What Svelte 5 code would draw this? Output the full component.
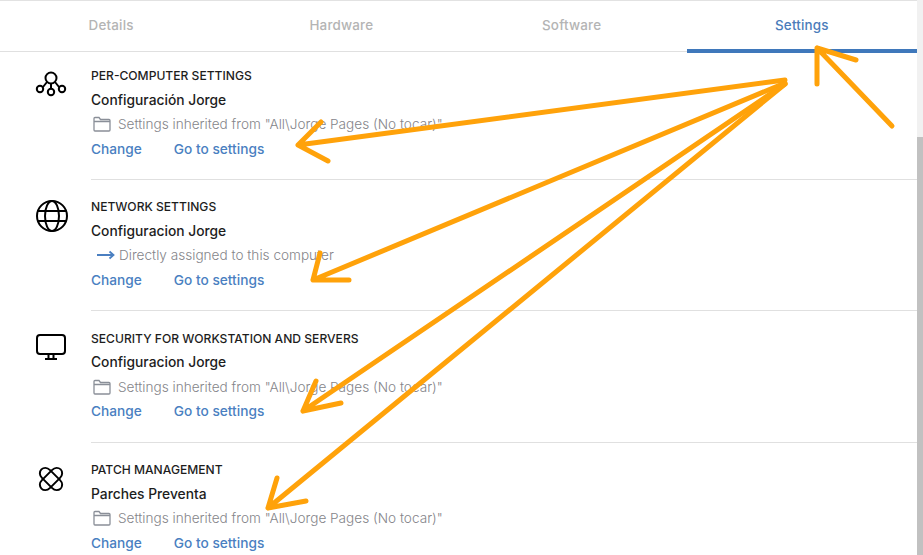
<script lang="ts">
  const tabs = ['Details', 'Hardware', 'Software', 'Settings'];

  const rows = [
    { icon: 'nodes', title: 'PER-COMPUTER SETTINGS', name: 'Configuración Jorge', origin: 'folder', text: 'Settings inherited from "All\\Jorge Pages (No tocar)"' },
    { icon: 'globe', title: 'NETWORK SETTINGS', name: 'Configuracion Jorge', origin: 'arrow', text: 'Directly assigned to this computer' },
    { icon: 'monitor', title: 'SECURITY FOR WORKSTATION AND SERVERS', name: 'Configuracion Jorge', origin: 'folder', text: 'Settings inherited from "All\\Jorge Pages (No tocar)"' },
    { icon: 'patch', title: 'PATCH MANAGEMENT', name: 'Parches Preventa', origin: 'folder', text: 'Settings inherited from "All\\Jorge Pages (No tocar)"' },
  ];

  const arrows = [
    'M785 80 L298 145 M321 122 L298 145 L328 161',
    'M785 83 L313 280 M320 253 L313 280 L349 280',
    'M785 84 L303 411 M316 381 L303 411 L341 403',
    'M785 84 L268 508 M277 478 L268 508 L306 501',
    'M892 126 L817 48 M817 84 L817 48 L856 60',
  ];
</script>

<div class="page">
  <div class="main">
    <div class="tabs">
      {#each tabs as tab, i}
        <div class="tab" class:active={i === 3}>{tab}</div>
      {/each}
    </div>

    {#each rows as row}
      <div class="row">
        <div class="icon">
          {#if row.icon === 'nodes'}
            <svg class="nodes" width="32" height="28" viewBox="0 0 32 28" fill="none" stroke="#000" stroke-width="2">
              <circle cx="16" cy="8" r="5.5" />
              <circle cx="5" cy="19" r="3.2" />
              <circle cx="16" cy="22" r="3.2" />
              <circle cx="27" cy="19" r="3.2" />
              <path d="M12 12 L8 17 M16 13.5 V19 M20 12 L24 17" />
            </svg>
          {:else if row.icon === 'globe'}
            <svg class="globe" width="32" height="32" viewBox="0 0 32 32" fill="none" stroke="#000" stroke-width="2">
              <circle cx="16" cy="16" r="15" />
              <ellipse cx="16" cy="16" rx="7" ry="15" />
              <path d="M2 11 H30 M2 21 H30" />
            </svg>
          {:else if row.icon === 'monitor'}
            <svg class="monitor" width="30" height="26" viewBox="0 0 30 26" fill="none" stroke="#000" stroke-width="2">
              <rect x="1" y="1" width="28" height="19" rx="3" />
              <path d="M12.5 20 V25 M17.5 20 V25 M9 25 H21" />
            </svg>
          {:else}
            <svg class="patch" width="26" height="26" viewBox="0 0 28 28" fill="none" stroke="#000" stroke-width="2.1">
              <path d="M8 2 C4.5 2 2 4.5 2 8 C2 10 3 11.5 4.5 13 L15 23.5 C16.5 25 18 26 20 26 C23.5 26 26 23.5 26 20 C26 18 25 16.5 23.5 15 L13 4.5 C11.5 3 10 2 8 2 Z" />
              <path d="M20 2 C23.5 2 26 4.5 26 8 C26 10 25 11.5 23.5 13 L13 23.5 C11.5 25 10 26 8 26 C4.5 26 2 23.5 2 20 C2 18 3 16.5 4.5 15 L15 4.5 C16.5 3 18 2 20 2 Z" />
            </svg>
          {/if}
        </div>
        <div class="body">
          <div class="title">{row.title}</div>
          <div class="name">{row.name}</div>
          <div class="origin">
            {#if row.origin === 'folder'}
              <svg class="folder" width="18" height="16" viewBox="0 0 18 16" fill="none" stroke="#8a8f98" stroke-width="1.3">
                <path d="M1 14 V2.5 C1 1.8 1.4 1.5 2 1.5 H6 L7.5 3.5 H16 C16.6 3.5 17 3.9 17 4.5 V14 C17 14.6 16.6 15 16 15 H2 C1.4 15 1 14.6 1 14 Z M1 5.5 H17" />
              </svg>
            {:else}
              <svg class="assigned" width="18" height="10" viewBox="0 0 18 10" fill="none" stroke="#4a7fc1" stroke-width="1.8">
                <path d="M0 5 H16 M12.5 1.5 L16.5 5 L12.5 8.5" />
              </svg>
            {/if}
            <span>{row.text}</span>
          </div>
          <div class="links">
            <span class="link">Change</span>
            <span class="link">Go to settings</span>
          </div>
        </div>
      </div>
    {/each}
  </div>

  <div class="scrollbar"><div class="thumb"></div></div>

  <svg class="arrows" width="923" height="555" viewBox="0 0 923 555" fill="none" stroke="#ffa20a" stroke-width="5" stroke-linecap="round" stroke-linejoin="round">
    {#each arrows as d}
      <path {d} />
    {/each}
  </svg>
</div>

<style>
  :global(body) { background: #fff; }

  .page { position: relative; width: 923px; height: 555px; overflow: hidden; display: flex; font-family: Inter, "Open Sans", sans-serif; background: #fff; }

  .main { flex: 1; min-width: 0; overflow: hidden; }

  .tabs { display: flex; height: 50px; margin-left: -4px; border-top: 1px solid #e2e2e2; border-bottom: 1px solid #e0e0e0; }
  .tab { flex: 1; display: flex; align-items: center; justify-content: center; padding-bottom: 2px; font-size: 13.4px; font-weight: 500; color: #b4b4b4; letter-spacing: 0.2px; }
  .tab.active { color: #4a7cba; padding-bottom: 0; border-bottom: 4px solid #3f78bb; margin-bottom: -2px; }

  .row { display: flex; height: 131px; box-sizing: border-box; }
  .row:nth-child(2) { height: 128px; }
  .row:nth-child(4) { height: 132px; }
  .icon { width: 91px; flex: none; display: flex; justify-content: center; padding: 20px 0 0 11px; box-sizing: border-box; align-items: flex-start; }
  .row:nth-child(2) .icon { padding-top: 18px; }
  .globe { margin-left: 2px; }
  .monitor { margin-top: 3px; }
  .patch { margin-top: 3px; }

  .body { flex: 1; padding-top: 18px; border-bottom: 1px solid #e0e0e0; box-sizing: border-box; }
  .row:nth-child(2) .body { padding-top: 15px; }
  .row:nth-child(4) .body { padding-top: 18.5px; }
  .row:last-child .body { border-bottom: none; }

  .title { font-size: 12.1px; font-weight: 500; color: #1d1d1d; line-height: 18px; }
  .name { font-size: 13.8px; font-weight: 500; color: #1d1d1d; line-height: 18px; margin-top: 5.5px; }
  .origin { display: flex; align-items: center; gap: 7px; font-size: 13.6px; font-weight: 300; color: #85858a; line-height: 18px; margin-top: 6.5px; }
  .folder { margin-left: 2px; }
  .assigned { margin-left: 6px; margin-right: -3px; }
  .links { display: flex; gap: 32px; margin-top: 6.5px; }
  .link { font-size: 13.7px; font-weight: 500; color: #4a7fc1; line-height: 18px; }

  .scrollbar { width: 6px; flex: none; background: #f1f1f1; padding-top: 137px; box-sizing: border-box; }
  .thumb { height: 100%; background: #c1c1c1; }

  .arrows { position: absolute; left: 0; top: 0; pointer-events: none; }
</style>
